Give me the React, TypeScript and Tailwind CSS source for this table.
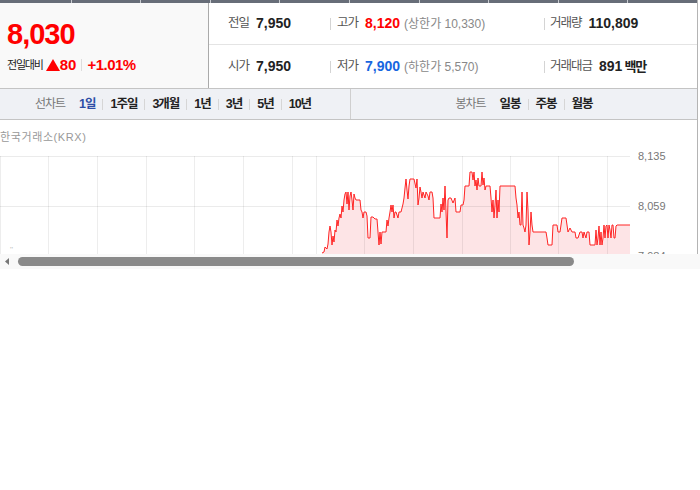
import React from 'react';

const tabs = [71, 69, 69, 69, 69, 69, 69, 69, 69, 69];

const linePeriods = ['1일', '1주일', '3개월', '1년', '3년', '5년', '10년'];
const candlePeriods = ['일봉', '주봉', '월봉'];

// page-space points (x, y), chart svg starts at y=148
const pts: [number, number][] = [
  [322,253],[324,252],[325,247],[327,249],[328,244],[329,232],[330,226],[331,232],[332,245],[333,236],[334,242],[335,230],[336,232],[337,220],[338,226],[339,218],[340,214],[341,218],[342,206],[343,212],[344,200],[345,194],[346,192],[347,204],[348,192],[349,210],[350,196],[351,192],[352,200],[353,210],[354,194],[355,198],[356,200],[358,200],[360,200],[361,210],[362,212],[363,218],[364,212],[366,212],[367,216],[368,238],[370,238],[371,217],[373,217],[375,219],[377,219],[378,232],[379,245],[380,232],[381,244],[382,232],[384,232],[386,232],[387,220],[388,226],[389,218],[390,212],[391,205],[392,212],[393,205],[394,218],[395,212],[396,212],[398,218],[399,212],[401,212],[403,204],[404,198],[405,188],[406,179],[407,190],[408,199],[409,186],[410,179],[412,179],[414,179],[416,188],[417,179],[418,205],[419,198],[420,187],[421,192],[422,198],[423,192],[425,198],[426,192],[428,196],[429,200],[430,192],[432,192],[433,198],[434,218],[436,218],[438,218],[440,218],[441,204],[442,212],[443,198],[444,210],[445,186],[446,212],[447,238],[448,200],[449,198],[451,198],[453,203],[455,198],[456,212],[458,212],[460,212],[461,205],[463,205],[464,200],[465,186],[467,186],[469,186],[470,172],[472,172],[473,180],[474,172],[475,186],[476,180],[477,190],[478,178],[479,186],[481,186],[482,172],[483,185],[484,178],[485,190],[486,186],[488,186],[490,186],[491,198],[492,212],[493,200],[494,218],[495,205],[496,190],[497,218],[498,200],[499,212],[500,186],[502,186],[505,186],[508,186],[510,186],[513,186],[515,186],[516,198],[517,205],[518,218],[519,212],[520,225],[521,225],[522,192],[523,225],[524,228],[525,232],[526,225],[527,192],[528,210],[529,245],[530,232],[531,212],[532,225],[533,232],[536,232],[540,232],[544,232],[546,232],[547,238],[548,245],[550,245],[552,245],[553,225],[555,225],[557,225],[558,232],[560,232],[561,225],[562,218],[564,218],[566,218],[567,225],[568,232],[570,228],[572,232],[575,232],[576,238],[578,238],[580,232],[582,232],[583,238],[584,232],[586,238],[587,232],[589,232],[590,245],[592,245],[594,245],[595,245],[596,230],[597,245],[598,238],[599,226],[600,245],[601,232],[602,245],[603,238],[604,225],[605,238],[606,226],[607,225],[608,238],[609,225],[610,230],[611,238],[612,225],[613,225],[614,238],[615,238],[616,226],[617,225],[620,225],[625,225],[630,225],
];

const vLines = [0.5, 48.5, 97.5, 146.5, 194.5, 243.5, 292.5, 316.5, 364.5, 413.5, 462.5, 510.5, 558.5, 607.5];

function Sep({ h = 'h-[12px]' }: { h?: string }) {
  return <span className={`inline-block w-px ${h} bg-[#d4d4d4]`} />;
}

function Stat({
  label,
  value,
  valueClass = 'text-[#222]',
  note,
}: {
  label: string;
  value: React.ReactNode;
  valueClass?: string;
  note?: string;
}) {
  return (
    <span className="flex items-center whitespace-nowrap">
      <span className="text-[12.5px] tracking-[-1px] text-[#555]">{label}</span>
      <span className={`ml-[7px] text-[14px] font-bold ${valueClass}`}>{value}</span>
      {note && <span className="ml-[4px] text-[12px] text-[#888]">{note}</span>}
    </span>
  );
}

function Chart() {
  const line = pts.map(([x, y]) => `${x},${y - 148}`).join(' ');
  const area = `322,120 ${line} 630,120`;
  return (
    <svg width="697" height="120" className="block">
      <polygon points={area} fill="#fde4e6" />
      {vLines.map((x) => (
        <line key={x} x1={x} y1={8} x2={x} y2={120} stroke="#000" strokeOpacity={0.07} />
      ))}
      {[8.5, 58.5, 108.5].map((y) => (
        <line key={y} x1={0} y1={y} x2={630} y2={y} stroke="#000" strokeOpacity={0.08} />
      ))}
      <polyline points={line} fill="none" stroke="#ff2424" strokeWidth={1} />
      {[
        ['8,135', 8],
        ['8,059', 58],
        ['7,984', 108],
      ].map(([t, y]) => (
        <text key={t as string} x={638} y={(y as number) + 4} fontSize="11" fill="#777" fontFamily="Liberation Sans, sans-serif">
          {t}
        </text>
      ))}
      <text x={10} y={104} fontSize="8" fill="#bbb">''</text>
    </svg>
  );
}

export default function App() {
  return (
    <div className="w-[700px] bg-white font-['Liberation_Sans','Noto_Sans_CJK_KR',sans-serif]">
      <div className="h-[254px] overflow-hidden">
        <div className="w-[698px] border-r border-[#b4b4b4]">
          {/* tab strip */}
          <div className="flex h-[3px] bg-[#c8cbd0]">
            {tabs.map((w, i) => (
              <div key={i} style={{ width: w }} className={`h-[3px] bg-[#676d78] ${i > 0 ? 'ml-px' : ''}`} />
            ))}
          </div>

          {/* quote summary */}
          <div className="flex h-[85px]">
            <div className="w-[209px] border-r border-[#aaa] bg-[#f9f9f9] pl-[7px] pt-[13px]">
              <div className="text-[29px] font-bold leading-[36px] tracking-[-1px] text-[#f00]">8,030</div>
              <div className="mt-[2px] flex items-center">
                <span className="text-[11px] tracking-[-1.2px] text-[#222]">전일대비</span>
                <svg width="14" height="12" className="ml-[3px]">
                  <polygon points="7,0 14,12 0,12" fill="#f00" />
                </svg>
                <span className="text-[15px] font-bold text-[#f00]">80</span>
                <span className="mx-[5px] inline-block h-[12px] w-px bg-[#ddd]" />
                <span className="text-[15px] font-bold tracking-[-0.5px] text-[#f00]">+1.01%</span>
              </div>
            </div>
            <div className="flex flex-1 flex-col">
              <div className="flex h-[42px] items-center border-b border-[#e4e4e4]">
                <div className="w-[121px] pl-[19px]">
                  <Stat label="전일" value="7,950" />
                </div>
                <div className="flex w-[214px] items-center gap-[6px]">
                  <Sep />
                  <Stat label="고가" value="8,120" valueClass="text-[#f00]" note="(상한가 10,330)" />
                </div>
                <div className="flex flex-1 items-center gap-[5px]">
                  <Sep />
                  <Stat label="거래량" value="110,809" />
                </div>
              </div>
              <div className="flex flex-1 items-center">
                <div className="w-[121px] pl-[19px]">
                  <Stat label="시가" value="7,950" />
                </div>
                <div className="flex w-[214px] items-center gap-[6px]">
                  <Sep />
                  <Stat label="저가" value="7,900" valueClass="text-[#1766e0]" note="(하한가 5,570)" />
                </div>
                <div className="flex flex-1 items-center gap-[5px]">
                  <Sep />
                  <Stat
                    label="거래대금"
                    value={
                      <>
                        891<span className="ml-[2px] text-[13px] tracking-[-1px]">백만</span>
                      </>
                    }
                  />
                </div>
              </div>
            </div>
          </div>

          {/* period tabs */}
          <div className="flex h-[32px] border-y border-[#c4c4c4] bg-[#eff1f5]">
            <div className="flex w-[351px] items-center justify-center border-r border-[#cfcfcf] pr-[4px]">
              <span className="mr-[14px] text-[12px] tracking-[-1px] text-[#777]">선차트</span>
              {linePeriods.map((p, i) => (
                <span key={p} className="flex items-center">
                  {i > 0 && <span className="mx-[7px] inline-block h-[11px] w-px bg-[#d6d6d6]" />}
                  <span className={`text-[12.5px] font-bold tracking-[-1px] ${i === 0 ? 'text-[#2d4ea6]' : 'text-[#222]'}`}>{p}</span>
                </span>
              ))}
            </div>
            <div className="flex flex-1 items-center justify-center">
              <span className="mr-[14px] text-[12px] tracking-[-1px] text-[#777]">봉차트</span>
              {candlePeriods.map((p, i) => (
                <span key={p} className="flex items-center">
                  {i > 0 && <span className="mx-[7px] inline-block h-[11px] w-px bg-[#d6d6d6]" />}
                  <span className="text-[12.5px] font-bold tracking-[-1px] text-[#222]">{p}</span>
                </span>
              ))}
            </div>
          </div>

          {/* chart */}
          <div className="pt-[9px]">
            <div className="h-[19px] text-[11px] leading-[16px] tracking-[0.6px] text-[#999]">한국거래소(KRX)</div>
            <Chart />
          </div>
        </div>
      </div>

      {/* horizontal scrollbar */}
      <div className="flex h-[15px] items-center bg-[#f9f9f9]">
        <svg width="18" height="15" className="shrink-0">
          <polygon points="5,7.5 9,4 9,11" fill="#777" />
        </svg>
        <div className="h-[9px] w-[556px] rounded-full bg-[#8a8a8a]" />
      </div>
    </div>
  );
}
